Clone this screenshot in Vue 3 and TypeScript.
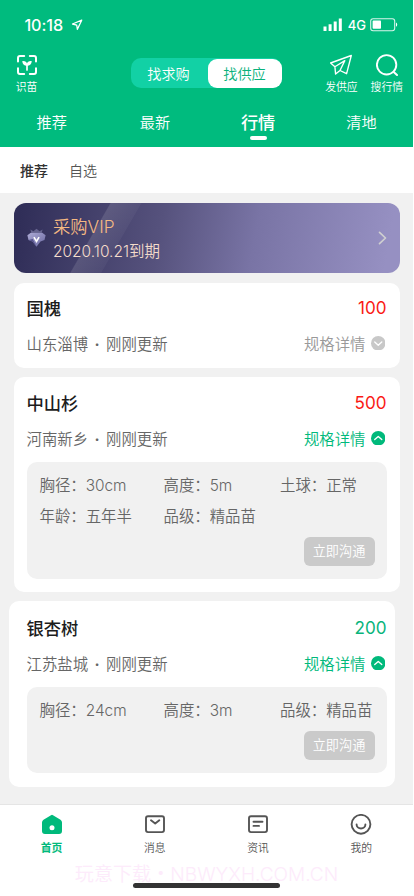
<script setup lang="ts">
import { ref } from 'vue'

interface Spec { label: string; value: string }
interface Quote {
  name: string
  place: string
  price: string
  trend: 'up' | 'down'
  open: boolean
  shifted?: boolean
  specs: Spec[]
}

const tabs = ['推荐', '最新', '行情', '清地']
const activeTab = ref(2)
const subTabs = ['推荐', '自选']
const activeSub = ref(0)
const nav = ['首页', '消息', '资讯', '我的']
const activeNav = ref(0)

const quotes = ref<Quote[]>([
  { name: '国槐', place: '山东淄博', price: '100', trend: 'up', open: false, specs: [] },
  {
    name: '中山杉', place: '河南新乡', price: '500', trend: 'up', open: true,
    specs: [
      { label: '胸径', value: '30cm' },
      { label: '高度', value: '5m' },
      { label: '土球', value: '正常' },
      { label: '年龄', value: '五年半' },
      { label: '品级', value: '精品苗' },
    ],
  },
  {
    name: '银杏树', place: '江苏盐城', price: '200', trend: 'down', open: true, shifted: true,
    specs: [
      { label: '胸径', value: '24cm' },
      { label: '高度', value: '3m' },
      { label: '品级', value: '精品苗' },
    ],
  },
])
</script>

<template>
  <div class="page">
    <header class="header">
      <div class="status">
        <span class="time">10:18</span>
        <svg class="loc" viewBox="0 0 12 12"><path d="M10.700 1.200 1.500 5l4.200 1.100L6.400 10.300z" fill="none" stroke="#fff" stroke-width="1.300" stroke-linejoin="round" /></svg>
        <svg class="signal" viewBox="0 0 20 13"><path d="M.5 8.500h3V13h-3zM5.600 6.200h3V13h-3zM10.700 3.400h3V13h-3zM15.800.4h3V13h-3z" fill="#fff" /></svg>
        <span class="net">4G</span>
        <svg class="battery" viewBox="0 0 28 14">
          <rect x=".7" y=".7" width="24" height="12" rx="2.400" fill="none" stroke="#fff" stroke-opacity=".85" stroke-width="1.100" />
          <rect x="2.600" y="2.600" width="8.400" height="8.200" rx=".8" fill="#fff" />
          <path d="M26 4.600q1.200.4 1.200 2.100T26 8.800z" fill="#fff" />
        </svg>
      </div>

      <div class="tools">
        <div class="tool scan">
          <svg viewBox="0 0 22 22">
            <g fill="none" stroke="#fff" stroke-width="2" stroke-linecap="round">
              <path d="M2 7.400V4a2 2 0 0 1 2-2h4.200M13.800 2H18a2 2 0 0 1 2 2v3.400M20 14.200V18a2 2 0 0 1-2 2h-4.200M8.200 20H4a2 2 0 0 1-2-2v-3.800" />
              <path d="M11 16v-5" stroke-width="1.700" />
            </g>
            <path d="M11 11.800C8 11.800 6.300 10 6.300 7c2.700-.3 4.300.7 4.700 2.600.4-1.900 2-2.900 4.700-2.600 0 3-1.700 4.800-4.700 4.800z" fill="#fff" />
          </svg>
          <span>识苗</span>
        </div>
        <div class="switch">
          <span>找求购</span>
          <span class="on">找供应</span>
        </div>
        <div class="tool send">
          <svg viewBox="0 0 22 22">
            <path d="M21.300 1.500.6 9l4.300 3.700.7 7.400 4.400-3.600 6.600 3.200zM4.900 12.700l9.900-6.100-4.800 9.900" fill="none" stroke="#fff" stroke-width="1.350" stroke-linejoin="round" stroke-linecap="round" />
          </svg>
          <span>发供应</span>
        </div>
        <div class="tool search">
          <svg viewBox="0 0 22 22">
            <circle cx="10.600" cy="10.800" r="9.700" fill="none" stroke="#fff" stroke-width="1.900" />
            <path d="m17.700 18 3.300 3" stroke="#fff" stroke-width="2" stroke-linecap="round" />
          </svg>
          <span>搜行情</span>
        </div>
      </div>

      <nav class="tabs">
        <span v-for="(t, i) in tabs" :key="t" class="tab" :class="{ active: i === activeTab }" @click="activeTab = i">{{ t }}</span>
      </nav>
    </header>

    <div class="subtabs">
      <span v-for="(t, i) in subTabs" :key="t" :class="{ active: i === activeSub }" @click="activeSub = i">{{ t }}</span>
    </div>

    <main class="content">
      <section class="vip">
        <svg class="gem" viewBox="0 0 20 20">
          <defs>
            <linearGradient id="gem" x1="0" y1="0" x2="1" y2="1">
              <stop offset="0" stop-color="#aeacd6" />
              <stop offset="1" stop-color="#68669f" />
            </linearGradient>
          </defs>
          <path d="m3.600 1.500 3.200 1.800L10 .8l3.200 2.500 3.200-1.800-.9 3.600h-11z" fill="#66648f" />
          <path d="M4 5h12l3.600 2.500-1.200 5-4.200 1.700L10 19.800l-4.200-5.600-4.200-1.700-1.200-5z" fill="url(#gem)" />
          <path d="m1.600 12.500 4.400-.8L10 19.800l-4.200-5.600z" fill="#55528b" />
          <path d="m7.300 9.600 2.700 4.600 2.700-4.600" fill="none" stroke="#fff" stroke-width="1.700" />
        </svg>
        <div class="vip-text">
          <div class="vip-title">采购VIP</div>
          <div class="vip-date">2020.10.21到期</div>
        </div>
        <svg class="chev" viewBox="0 0 9 14"><path d="m1.500 1.300 6 5.700-6 5.700" fill="none" stroke="#cfcfd0" stroke-width="1.700" stroke-linecap="round" stroke-linejoin="round" /></svg>
      </section>

      <article v-for="q in quotes" :key="q.name" class="card" :class="{ shifted: q.shifted, open: q.open }">
        <div class="row head">
          <span class="name">{{ q.name }}</span>
          <span class="price" :class="q.trend">{{ q.price }}</span>
        </div>
        <div class="row meta">
          <span class="place">{{ q.place }}<i>·</i>刚刚更新</span>
          <span class="toggle" @click="q.open = !q.open">规格详情
            <svg viewBox="0 0 14 14">
              <circle cx="7" cy="7" r="7" fill="currentColor" />
              <path :d="q.open ? 'M3.600 8.300 7 5.200l3.400 3.100' : 'M3.600 5.800 7 8.900l3.400-3.100'" fill="none" stroke="#fff" stroke-width="1.300" stroke-linecap="round" stroke-linejoin="round" />
            </svg>
          </span>
        </div>
        <div v-if="q.open" class="panel">
          <div class="specs">
            <span v-for="s in q.specs" :key="s.label">{{ s.label }}：{{ s.value }}</span>
          </div>
          <button class="chat">立即沟通</button>
        </div>
      </article>
    </main>

    <footer class="footer">
      <div v-for="(n, i) in nav" :key="n" class="nav" :class="{ active: i === activeNav }" @click="activeNav = i">
        <svg viewBox="0 0 22 22">
          <template v-if="i === 0">
            <path d="M10 1.200Q11 .5 12 1.200l7.500 4.600Q21 6.700 21 8.500V17q0 3-3 3H4q-3 0-3-3V8.500q0-1.800 1.500-2.700z" fill="currentColor" />
            <circle cx="11" cy="13.800" r="2.500" fill="#fff" />
          </template>
          <g v-else fill="none" stroke="currentColor" stroke-width="1.900" stroke-linecap="round" stroke-linejoin="round">
            <template v-if="i === 1">
              <rect x="2" y="2.300" width="18" height="15.800" rx="2" />
              <path d="m7 6.300 4.200 3.300 4.100-3.300" />
            </template>
            <template v-else-if="i === 2">
              <rect x="2" y="2.300" width="18" height="15.800" rx="2" />
              <path d="M6.500 7.700h9M6.500 11.900h5.500" />
            </template>
            <template v-else>
              <circle cx="11" cy="10.300" r="9.400" />
              <path d="M6.600 10.500a4.400 4 0 0 0 8.800 0" />
            </template>
          </g>
        </svg>
        <span>{{ n }}</span>
      </div>
      <div class="mark">玩意下载・NBWYXH.COM.CN</div>
      <div class="home-bar"></div>
    </footer>
  </div>
</template>

<style>
body { background: #fff; }
</style>

<style scoped>
* { box-sizing: border-box; }
.page {
  width: 413px;
  height: 896px;
  display: flex;
  flex-direction: column;
  overflow: hidden;
  background: #f1f1f1;
  font-family: Inter, "Noto Sans CJK SC", sans-serif;
  font-weight: 350;
  white-space: nowrap;
}
svg { display: block; flex: none; }
.header { height: 147px; flex: none; background: #00bb7e; color: #fff; }
.status { height: 49px; padding: 0 15px 0 24.500px; display: flex; align-items: center; }
.time { font-size: 16.200px; font-weight: 500; letter-spacing: -.1px; }
.loc { width: 12px; height: 12px; margin-left: 8px; }
.signal { width: 20px; height: 13px; margin-left: auto; }
.net { font-size: 13px; font-weight: 500; margin: 0 4px 0 5px; }
.battery { width: 28px; height: 14px; }
.tools { height: 50px; padding: 4px 10px 0 0; display: flex; align-items: flex-start; }
.tool { display: flex; flex-direction: column; align-items: center; font-size: 10.800px; line-height: 16px; }
.tool svg { width: 22px; height: 22px; margin-top: 1px; margin-bottom: 3.500px; }
.scan { width: 53px; }
.switch { width: 151px; height: 30px; margin: 5px 0 0 78px; border-radius: 10px; background: #12d1a5; display: flex; align-items: center; font-size: 14.200px; }
.switch span { width: 77px; padding-right: 2px; line-height: 29px; text-align: center; }
.switch .on { width: 74px; padding: 0 1px 0 0; border-radius: 9px; background: #fff; color: #0ab17c; }
.send { margin-left: auto; }
.search { margin-left: 13px; }
.tabs { height: 48px; display: flex; line-height: 48px; }
.tab { flex: 1; display: flex; flex-direction: column; align-items: center; font-size: 15.200px; }
.tab.active { font-size: 17.200px; font-weight: 500; }
.tab.active::after { content: ""; width: 17px; height: 4.500px; margin-top: -11.500px; border-radius: 3px; background: #fff; }
.subtabs { height: 46px; flex: none; padding: 0 20px; display: flex; gap: 21px; background: #fff; font-size: 14px; line-height: 47px; color: #555; }
.subtabs .active { color: #333; font-weight: 500; }
.content { flex: 1; padding: 10px 13px 0 13.500px; }
.vip {
  height: 69.500px; margin-bottom: 10px; padding: 0 13px 0 13px; border-radius: 12px; display: flex; align-items: center;
  background:
    linear-gradient(120deg, transparent 22.500%, rgba(255,255,255,.12) 22.800%, rgba(255,255,255,.04) 29.800%, transparent 30%) no-repeat,
    linear-gradient(100deg, #302e58 2%, #56527d 38%, #7974a5 62%, #9690c2 96%);
}
.gem { width: 19px; height: 19px; }
.vip-text { margin-left: 7.500px; padding-top: 2px; flex: 1; }
.vip-title { font-size: 17.300px; line-height: 25px; color: #f5b982; }
.vip-date { font-size: 15.500px; line-height: 25px; color: #f4dccb; }
.chev { width: 9px; height: 14px; }
.card { height: 85px; margin-bottom: 9.500px; padding: 0 13.500px 0 13px; border-radius: 10px; background: #fff; }
.card.open { height: auto; padding-bottom: 13px; margin-bottom: 9px; }
.card.shifted { margin-left: -5px; margin-right: 5px; padding: 0 8.500px 13.500px 18px; }
.row { display: flex; justify-content: space-between; align-items: center; }
.head { height: 50px; }
.open .head { height: 50.500px; }
.shifted .head { height: 51.500px; padding-top: 1.500px; }
.name { font-size: 17.300px; font-weight: 500; color: #1c1c1c; }
.price { font-size: 17.100px; font-weight: 400; }
.up { color: #fa1915; }
.down { color: #08b47b; }
.meta { height: 21px; font-size: 15.400px; color: #666; }
.place i { display: inline-block; width: 18px; text-align: center; font-style: normal; font-weight: 700; }
.toggle { display: flex; align-items: center; gap: 5px; color: #999; padding-right: 1.500px; }
.toggle svg { width: 14.500px; height: 14.500px; color: #c8c8c8; }
.open .toggle, .open .toggle svg { color: #00b97b; }
.panel { margin-top: 13.500px; padding: 8px 12px 13px 13px; border-radius: 10px; background: #f1f1f1; display: flex; flex-direction: column; }
.specs { display: grid; grid-template-columns: 124px 116.500px 1fr; font-size: 15.400px; line-height: 31px; color: #666; }
.chat { align-self: flex-end; width: 71px; height: 29px; margin-top: 5px; padding: 0; border: 0; border-radius: 6px; background: #cacaca; color: #fff; font: inherit; font-size: 13.200px; line-height: 29px; }
.footer { position: relative; height: 92.500px; flex: none; display: flex; background: #fff; border-top: 1px solid #e5e5e5; }
.nav { flex: 1; padding-top: 9px; display: flex; flex-direction: column; align-items: center; color: #555; font-size: 10.800px; line-height: 16px; }
.nav svg { width: 22px; height: 22px; margin-bottom: 5px; }
.nav.active { color: #00b97b; font-weight: 700; }
.mark { position: absolute; left: 0; right: 0; top: 56px; text-align: center; font-size: 19.100px; line-height: 26px; color: #fdebfb; }
.home-bar { position: absolute; left: 133px; top: 78px; width: 147px; height: 5px; border-radius: 3px; background: #333; }
</style>
